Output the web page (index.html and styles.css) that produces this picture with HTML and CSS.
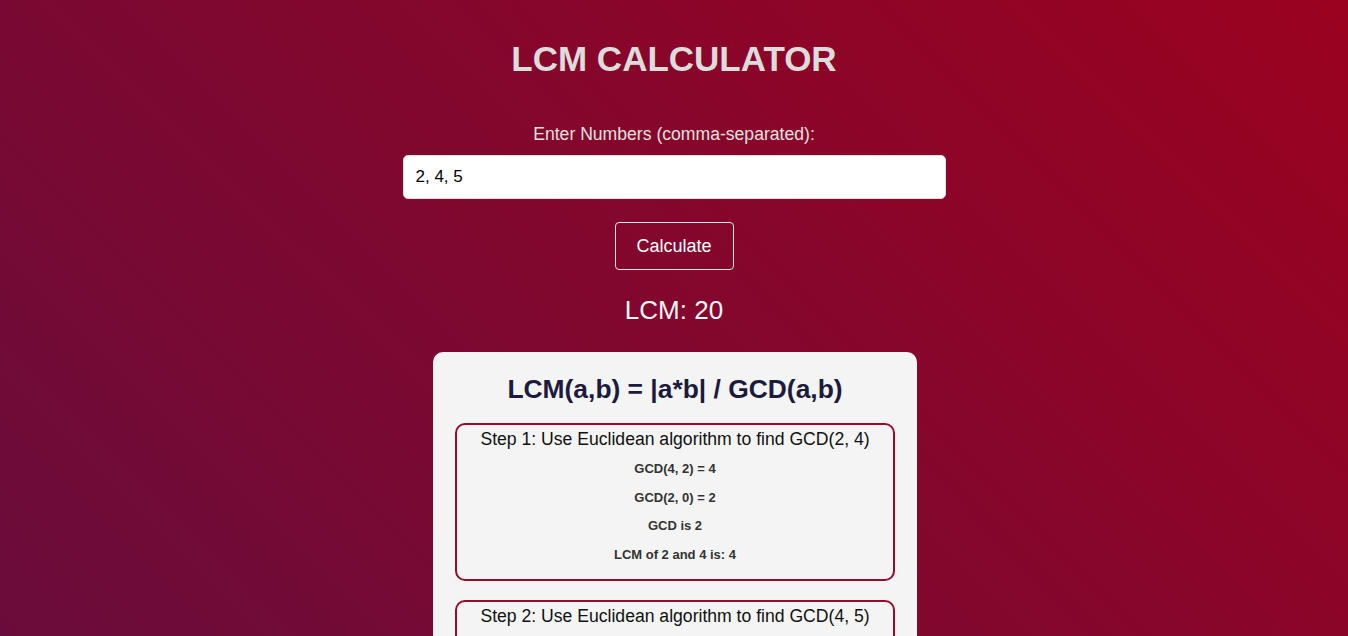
FILE: index.html
```html
<!DOCTYPE html>
<html lang="en">
<head>
<meta charset="utf-8">
<title>LCM Calculator</title>
<link rel="stylesheet" href="styles.css">
</head>
<body>
<main class="page">
  <h1 class="title">LCM CALCULATOR</h1>
  <label class="label" for="nums">Enter Numbers (comma-separated):</label>
  <input class="input" id="nums" type="text" value="2, 4, 5">
  <button class="btn" type="button">Calculate</button>
  <div class="result">LCM: 20</div>
  <section class="card">
    <h2 class="formula">LCM(a,b) = |a*b| / GCD(a,b)</h2>
    <div class="step">
      <div class="step-title">Step 1: Use Euclidean algorithm to find GCD(2, 4)</div>
      <p class="line">GCD(4, 2) = 4</p>
      <p class="line">GCD(2, 0) = 2</p>
      <p class="line">GCD is 2</p>
      <p class="line">LCM of 2 and 4 is: 4</p>
    </div>
    <div class="step">
      <div class="step-title">Step 2: Use Euclidean algorithm to find GCD(4, 5)</div>
      <p class="line">GCD(5, 4) = 5</p>
      <p class="line">GCD(4, 1) = 4</p>
      <p class="line">GCD(1, 0) = 1</p>
      <p class="line">GCD is 1</p>
      <p class="line">LCM of 4 and 5 is: 20</p>
    </div>
  </section>
</main>
</body>
</html>
```

FILE: styles.css
```css
html, body {
  margin: 0;
  padding: 0;
}
body {
  min-height: 100vh;
  font-family: "Liberation Sans", Arial, sans-serif;
  background: linear-gradient(45deg, #6a0c3b 0%, #9b0220 100%) fixed;
  color: #fff;
}
.page {
  display: flex;
  flex-direction: column;
  align-items: center;
  padding-top: 38px;
  padding-bottom: 40px;
}
.title {
  margin: 0;
  font-size: 35px;
  line-height: 41px;
  font-weight: bold;
  color: #dcdcdc;
}
.label {
  margin-top: 45px;
  font-size: 17.6px;
  line-height: 20px;
  color: #e0e0e0;
}
.input {
  margin-top: 11px;
  box-sizing: border-box;
  width: 543px;
  height: 44px;
  padding: 0 12px;
  border: 1px solid #ddd;
  border-radius: 5px;
  background: #fff;
  font-family: "Liberation Sans", Arial, sans-serif;
  font-size: 17px;
  color: #000;
  outline: none;
}
.btn {
  margin-top: 23px;
  box-sizing: border-box;
  width: 119px;
  height: 48px;
  border: 1px solid #e6e6e6;
  border-radius: 4px;
  background: transparent;
  color: #fff;
  font-family: "Liberation Sans", Arial, sans-serif;
  font-size: 18px;
}
.result {
  margin-top: 25px;
  font-size: 26px;
  line-height: 30px;
  color: #f4f4f4;
}
.card {
  margin-top: 27px;
  margin-left: 2px;
  box-sizing: border-box;
  width: 484px;
  padding: 22px 22px 20px;
  background: #f4f4f4;
  border-radius: 10px;
  color: #111;
}
.formula {
  margin: 0 0 19px;
  text-align: center;
  font-size: 26.4px;
  line-height: 30px;
  font-weight: bold;
  color: #1c1a3d;
}
.step {
  border: 2px solid #9a0a2c;
  border-radius: 10px;
  padding: 4px 10px 4px;
  margin-bottom: 19px;
  text-align: center;
}
.step-title {
  font-size: 17.6px;
  line-height: 21px;
  color: #111;
}
.line {
  margin: 13.5px 0;
  font-size: 13px;
  line-height: 15px;
  font-weight: bold;
  color: #333;
}
.step-title + .line {
  margin-top: 11px;
}
```
